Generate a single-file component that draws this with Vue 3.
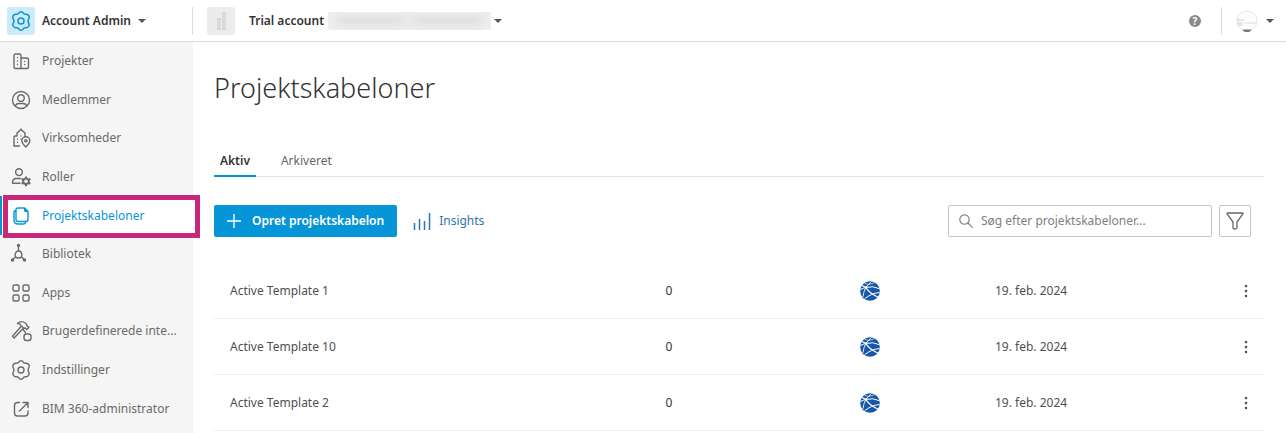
<template>
  <div class="app">
    <header class="topbar">
      <button class="product" type="button">
        <span class="tile tile-blue">
          <svg width="22" height="22" viewBox="0 0 22 22" fill="none" stroke="currentColor" stroke-width="1.5" stroke-linejoin="round">
            <path :d="gearPath" />
            <circle cx="11" cy="11" r="3" />
          </svg>
        </span>
        <span>Account Admin</span>
        <span class="caret"></span>
      </button>
      <button class="account" type="button">
        <span class="tile tile-gray">
          <svg width="28" height="28" viewBox="0 0 28 28" fill="currentColor">
            <rect x="10" y="11" width="4" height="12" />
            <rect x="15" y="5" width="4" height="18" />
            <path d="M10 14h4M10 17h4M10 20h4M15 8h4M15 11h4M15 14h4M15 17h4M15 20h4" stroke="#ececec" stroke-width=".5" />
          </svg>
        </span>
        <span>Trial account</span>
        <span class="redacted"><i></i><i></i></span>
        <span class="caret"></span>
      </button>
      <div class="user-area">
        <button class="help" type="button" aria-label="Help">?</button>
        <button class="user" type="button" aria-label="User">
          <svg width="22" height="22" viewBox="0 0 22 22">
            <circle cx="11" cy="11" r="10" fill="#fdfdfd" stroke="#dddde6" stroke-width=".8" />
            <path d="M1 10h7M1 13h6M2 15h5" stroke="#cfcfcf" stroke-width="1.2" />
            <path d="M8 13h12" stroke="#dedede" stroke-width="1" />
            <path d="M7 20h8l-2 1.500h-4z" fill="#77777f" stroke="#77777f" />
          </svg>
          <span class="caret"></span>
        </button>
      </div>
    </header>

    <div class="body">
      <nav class="sidebar">
        <a
          v-for="item in navItems"
          :key="item.label"
          href="#"
          class="nav-item"
          :class="{ active: item.active }"
        >
          <svg class="nav-icon" width="22" height="22" viewBox="0 0 22 22" fill="none" stroke="currentColor" stroke-width="1.4" stroke-linecap="round" stroke-linejoin="round">
            <path :d="item.icon" />
            <path v-if="item.solid" :d="item.solid" fill="currentColor" stroke="none" fill-rule="evenodd" />
          </svg>
          <span class="nav-label">{{ item.label }}</span>
        </a>
      </nav>

      <main class="content">
        <h1>Projektskabeloner</h1>

        <div class="tabs" role="tablist">
          <button class="tab selected" type="button" role="tab" aria-selected="true">Aktiv</button>
          <button class="tab" type="button" role="tab" aria-selected="false">Arkiveret</button>
        </div>

        <div class="toolbar">
          <button class="create" type="button">
            <svg width="14" height="14" viewBox="0 0 14 14" fill="none" stroke="currentColor" stroke-width="1.4">
              <path d="M7 0v14M0 7h14" />
            </svg>
            <span>Opret projektskabelon</span>
          </button>
          <a class="insights" href="#">
            <svg width="18" height="20" viewBox="0 0 18 20" fill="none" stroke="currentColor" stroke-width="1.5">
              <path d="M1.500 12v7M6.500 8v11M11.500 10v9M16.500 2v17" />
            </svg>
            <span>Insights</span>
          </a>
          <label class="search">
            <svg width="14" height="14" viewBox="0 0 14 14" fill="none" stroke="currentColor" stroke-width="1.2" stroke-linecap="round">
              <circle cx="5.500" cy="5.500" r="4.700" />
              <path d="M9 9l4.300 4.300" />
            </svg>
            <input v-model="query" type="text" placeholder="Søg efter projektskabeloner..." aria-label="Søg efter projektskabeloner" />
          </label>
          <button class="filter" type="button" aria-label="Filter">
            <svg width="18" height="18" viewBox="0 0 18 18" fill="none" stroke="currentColor" stroke-width="1.3" stroke-linejoin="round">
              <path d="M1.500 1h15q.8 0 .4.900l-5.900 8.100v5.500q0 1.500-2 1.500h-.5q-1.500 0-1.500-1.500v-5.500l-5.900-8.100q-.4-.900.4-.900z" />
            </svg>
          </button>
        </div>

        <table class="templates">
          <colgroup>
            <col />
            <col class="col-count" />
            <col class="col-source" />
            <col class="col-date" />
            <col class="col-menu" />
          </colgroup>
          <tbody>
            <tr v-for="row in rows" :key="row.name">
              <td class="name">{{ row.name }}</td>
              <td class="count">{{ row.count }}</td>
              <td class="source">
                <svg width="20" height="20" viewBox="0 0 20 20" fill="none">
                  <circle cx="10" cy="10" r="9.800" fill="#1858a8" />
                  <g stroke="#fff" stroke-linecap="round">
                    <path d="M.8 8.500Q3 6.800 6 6.500Q13 4.500 19 7.500" stroke-width="1" />
                    <path d="M10.500 1.500Q8 3.500 6 6.500Q3.500 10.500 3 15.500" stroke-width=".9" />
                    <path d="M2 4.500Q4 5.500 6 6.500Q8 11 17.500 16" stroke-width="1.200" />
                    <path d="M19 11.500Q11 12.500 5 17.500" stroke-width="1" />
                    <path d="M5 2.500l4 1 5-1.500" stroke-width=".6" />
                  </g>
                  <circle cx="6" cy="6.500" r="1.300" fill="#fff" />
                </svg>
              </td>
              <td class="date">{{ row.date }}</td>
              <td class="menu">
                <button type="button" aria-label="Menu">
                  <svg width="4" height="16" viewBox="0 0 4 16" fill="currentColor">
                    <circle cx="2" cy="3" r="1.300" />
                    <circle cx="2" cy="8" r="1.300" />
                    <circle cx="2" cy="13" r="1.300" />
                  </svg>
                </button>
              </td>
            </tr>
          </tbody>
        </table>
      </main>
    </div>
  </div>
</template>

<script setup>
import { ref } from 'vue'

const query = ref('')

const gearPath =
  'M9.300 2.500Q11 .8 12.700 2.500Q13.700 4.500 16 4.300Q18.600 4.300 19.200 6.700Q19.500 8 18.600 9Q17.400 11 18.600 13Q19.800 14.500 18.800 16Q17.800 17.900 16 17.700Q13.700 17.500 12.700 19.500Q11 21.200 9.300 19.500Q8.300 17.500 6 17.700Q4.200 17.900 3.200 16Q2.200 14.500 3.400 13Q4.600 11 3.400 9Q2.500 8 2.800 6.700Q3.400 4.300 6 4.300Q8.300 4.500 9.300 2.500Z'

const navItems = [
  {
    label: 'Projekter',
    icon: 'M11 18.500H5.500a1.500 1.500 0 0 1-1.500-1.500V5.500a1.500 1.500 0 0 1 1.500-1.500h4a1.500 1.500 0 0 1 1.500 1.500zM11 8h6a1.500 1.500 0 0 1 1.500 1.500V17a1.500 1.500 0 0 1-1.500 1.500h-6M7.500 7.500v.1M7.500 11v.1M7.500 14.500v.1M14.800 11.500v.1M14.800 14.500v.1'
  },
  {
    label: 'Medlemmer',
    icon: 'M11 2.500a8.500 8.500 0 1 1 0 17a8.500 8.500 0 1 1 0-17M11 5.800a3.300 3.300 0 1 1 0 6.600a3.300 3.300 0 1 1 0-6.600M5.500 17.200v-.7q.7-2 3.500-2h4q2.800 0 3.500 2v.7'
  },
  {
    label: 'Virksomheder',
    icon: 'M9.500 19H4V10a1 1 0 0 1 1-1h2V6l4-3.500L15 6v3M11 2v1M7.500 12v.1M7.500 15.500v.1M11 9v.1M11 12v.1M15.800 20Q11.800 16 11.800 13.800a4 4 0 0 1 8 0Q19.800 16 15.800 20zM15.800 12.700a1 1 0 1 1 0 2.200a1 1 0 1 1 0-2.200'
  },
  {
    label: 'Roller',
    icon: 'M9 2.800a3.400 3.400 0 1 1 0 6.800a3.400 3.400 0 1 1 0-6.800M10.500 12.500H6q-3.500 0-3.500 4.800H10',
    solid: 'M15.200 10.500h1.600l.5 1.500 1 .5 1.600-.4.9 1.500-1.100 1.200v1.100l1.100 1.200-.9 1.500-1.600-.4-1 .5-.5 1.500h-1.600l-.5-1.500-1-.5-1.600.4-.9-1.500 1.100-1.200v-1.100l-1.100-1.200.9-1.500 1.600.4 1-.5zM16 13.500a1.800 1.800 0 1 0 0 3.600a1.800 1.800 0 1 0 0-3.600z'
  },
  {
    label: 'Projektskabeloner',
    icon: 'M8 3h6.500l3.500 3.500V14.500a2 2 0 0 1-2 2H8a2 2 0 0 1-2-2V5a2 2 0 0 1 2-2zM6 5.500Q4 5.500 4 8v7q0 4 4 4h5.500q1.500 0 2-1.200',
    solid: 'M14 3h1l3 3v1h-2.500a1.500 1.500 0 0 1-1.500-1.500z',
    active: true
  },
  {
    label: 'Bibliotek',
    icon: 'M8.500 2.500V8M5 14.500L2.500 17M12 14.500l2.500 2.500M8.500 8a3.200 3.200 0 0 1 3.200 3.200q.8 3.800-3.200 3.800t-3.200-3.800A3.200 3.200 0 0 1 8.500 8z',
    solid: 'M8.500.8a1.700 1.700 0 1 1 0 3.400a1.700 1.700 0 1 1 0-3.400M2.500 15.200a1.800 1.800 0 1 1 0 3.600a1.800 1.800 0 1 1 0-3.600M14.500 15.200a1.800 1.800 0 1 1 0 3.600a1.800 1.800 0 1 1 0-3.600'
  },
  {
    label: 'Apps',
    icon: 'M4.500 3h3Q9 3 9 4.500v3Q9 9 7.500 9h-3Q3 9 3 7.500v-3Q3 3 4.500 3zM14.500 3h3Q19 3 19 4.500v3Q19 9 17.500 9h-3Q13 9 13 7.500v-3Q13 3 14.500 3zM4.500 13h3Q9 13 9 14.500v3Q9 19 7.500 19h-3Q3 19 3 17.500v-3Q3 13 4.500 13zM14.500 13h3q1.500 0 1.500 1.500v3q0 1.500-1.500 1.500h-3q-1.500 0-1.500-1.500v-3q0-1.500 1.500-1.500z'
  },
  {
    label: 'Brugerdefinerede inte...',
    icon: 'M7.500 3.500Q12-.5 16.500 4l.3 1.700 2.200 1.600-2.200 2.200-1.600-1.500-1.400.2L11.500 6Q10 3.500 7.500 3.500zM11 6.500l-8.500 9.800 1.600 1.700 9-9.500M12.500 9l3 3.500M16.500 14h2q2.500 0 2.500 2.500v1.500q0 2.500-2.500 2.500h-2q-2.500 0-2.500-2.500v-1.500q0-2.500 2.500-2.500z'
  },
  { label: 'Indstillinger', icon: gearPath + 'M11 8a3 3 0 1 1 0 6a3 3 0 1 1 0-6' },
  {
    label: 'BIM 360-administrator',
    icon: 'M9.500 4.500H7.500q-3 0-3 3v7.500q0 3 3 3h7.500q3 0 3-3V13M9.500 13L18 4.500M13 4.500h5v5'
  }
]

const rows = [
  { name: 'Active Template 1', count: 0, date: '19. feb. 2024' },
  { name: 'Active Template 10', count: 0, date: '19. feb. 2024' },
  { name: 'Active Template 2', count: 0, date: '19. feb. 2024' }
]
</script>

<style>
body {
  margin: 0;
  background: #fff;
}
</style>

<style scoped>
.app {
  display: flex;
  flex-direction: column;
  min-height: 100vh;
  font-family: "Noto Sans", "Open Sans", sans-serif;
  font-size: 12px;
  line-height: 16px;
  color: #4f4f4f;
}

button,
input {
  font: inherit;
  color: inherit;
  border: 0;
  padding: 0;
  background: none;
}

a {
  color: inherit;
  text-decoration: none;
}

svg {
  flex-shrink: 0;
}

.topbar {
  display: flex;
  align-items: center;
  height: 41px;
  border-bottom: 1px solid #dcdcdc;
}

.product,
.account {
  display: flex;
  align-items: center;
  font-weight: 600;
  color: #333;
}

.product {
  flex: 0 0 193px;
  box-sizing: border-box;
  height: 28px;
  padding-left: 7px;
  gap: 7px;
  border-right: 1px solid #dcdcdc;
}

.account {
  padding-left: 14px;
}

.tile {
  display: flex;
  align-items: center;
  justify-content: center;
  width: 28px;
  height: 28px;
  border-radius: 3px;
}

.tile-blue {
  background: #cdeaf7;
  color: #0696d7;
}

.tile-gray {
  background: #ececec;
  color: #d6d6d6;
  margin-right: 14px;
}

.caret {
  border: 4px solid transparent;
  border-top-color: #555;
  border-bottom: 0;
}

.redacted {
  display: flex;
  align-items: center;
  justify-content: space-evenly;
  width: 163px;
  height: 18px;
  margin: 0 3px 0 4px;
  background: #efefef;
  overflow: hidden;
}

.redacted i {
  width: 70px;
  height: 7px;
  background: #d8dada;
  filter: blur(4px);
}

.user-area {
  display: flex;
  align-items: center;
  margin-left: auto;
  padding-right: 12px;
}

.help {
  width: 12px;
  height: 12px;
  margin-right: 20px;
  border-radius: 50%;
  background: #8a8a8a;
  color: #fff;
  font-size: 10px;
  font-weight: 700;
  line-height: 12px;
}

.user {
  display: flex;
  align-items: center;
  gap: 8px;
  height: 28px;
  padding-left: 14px;
  border-left: 1px solid #dcdcdc;
}

.body {
  flex: 1;
  display: flex;
}

.sidebar {
  flex: 0 0 193px;
  min-width: 0;
  display: flex;
  flex-direction: column;
  box-sizing: border-box;
  padding-bottom: 5px;
  background: #f5f5f5;
}

.nav-item {
  position: relative;
  flex: 1;
  display: flex;
  align-items: center;
  gap: 10px;
  padding: 0 12px 0 10px;
  color: #6a6a6a;
}

.nav-icon {
  position: relative;
  z-index: 2;
}

.nav-label {
  position: relative;
  z-index: 2;
  white-space: nowrap;
}

.active {
  color: #0696d7;
  background: #fff;
  box-shadow: inset 2px 0 #0696d7;
}

/* frame around the current section, spills over the sidebar edge */
.active::after {
  content: "";
  position: absolute;
  z-index: 1;
  inset: -1px -7px -3px 3px;
  border: 5px solid #c9277a;
  background: #fff;
}

.content {
  flex: 1;
  min-width: 0;
  padding: 28px 22px 0 21px;
}

h1 {
  margin: 0 0 40px;
  font-size: 27px;
  font-weight: 300;
  line-height: 36px;
  color: #333;
}

.tabs {
  display: flex;
  gap: 19px;
  border-bottom: 1px solid #e4e4e4;
}

.tab {
  height: 31px;
  margin-bottom: -1px;
  padding: 0 6px;
  border-bottom: 2px solid transparent;
  color: #666;
}

.tab.selected {
  font-weight: 600;
  color: #333;
  border-bottom-color: #0696d7;
}

.toolbar {
  display: flex;
  align-items: center;
  margin: 28px 13px 0 0;
}

.create {
  display: flex;
  align-items: center;
  gap: 11px;
  height: 32px;
  padding: 0 13px;
  border-radius: 2px;
  background: #0696d7;
  color: #fff;
  font-weight: 600;
}

.insights {
  display: flex;
  align-items: center;
  gap: 8px;
  margin-left: 16px;
  color: #2e74ae;
}

.search {
  display: flex;
  align-items: center;
  gap: 8px;
  box-sizing: border-box;
  width: 264px;
  height: 32px;
  margin: 0 7px 0 auto;
  padding: 0 10px;
  border: 1px solid #c4c4c4;
  border-radius: 2px;
  color: #808080;
}

.search input {
  flex: 1;
  min-width: 0;
  outline: 0;
}

.search input::placeholder {
  color: #808080;
  opacity: 1;
}

.filter {
  display: flex;
  align-items: center;
  justify-content: center;
  box-sizing: border-box;
  width: 32px;
  height: 32px;
  border: 1px solid #c4c4c4;
  border-radius: 2px;
  color: #666;
}

.templates {
  width: 100%;
  margin-top: 26px;
  table-layout: fixed;
  border-collapse: collapse;
}

.col-count {
  width: 152px;
}

.col-source {
  width: 250px;
}

.col-date {
  width: 232px;
}

.col-menu {
  width: 37px;
}

.templates td {
  height: 55px;
  padding: 0;
  border-bottom: 1px solid #eee;
}

.templates .name {
  padding-left: 16px;
}

.count {
  text-align: center;
  color: #333;
}

.source {
  text-align: center;
}

.source svg {
  display: block;
  margin: auto;
}

.menu button {
  display: flex;
  justify-content: center;
  width: 100%;
  color: #555;
}
</style>
